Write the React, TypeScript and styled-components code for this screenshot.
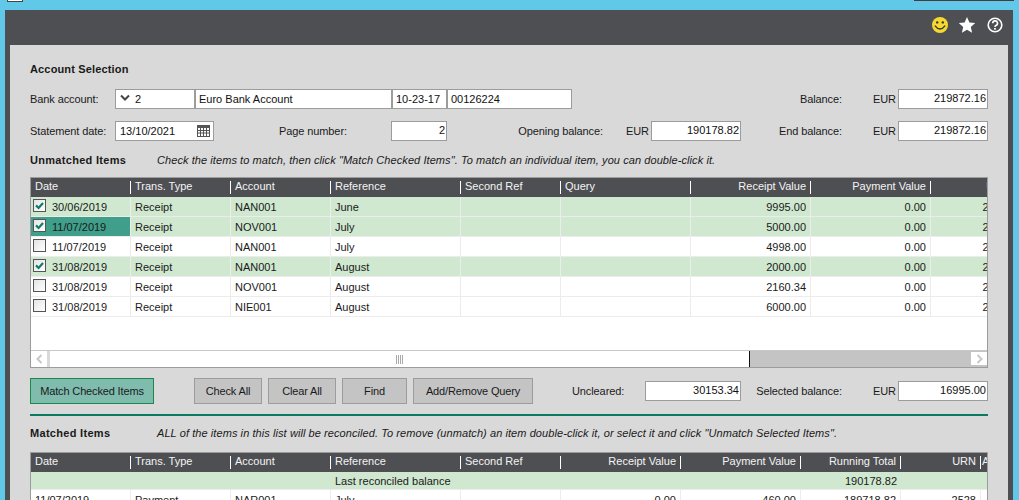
import React from "react";
import styled, { createGlobalStyle } from "styled-components";

const Global = createGlobalStyle`
  html, body { margin: 0; height: 500px; overflow: hidden; background: #62c8ea; }
  body { font-family: "Liberation Sans", Arial, sans-serif; font-size: 11px; color: #1a1a1a; }
  * { box-sizing: border-box; }
`;
const TopStrip = styled.div`height: 10px; display: flex; justify-content: space-between; align-items: flex-start; padding: 0 5px 0 7px;`;
const WindowBox = styled.div`width: 16px; height: 2px; background: #fff; border: 1px solid #444; border-top: 0;`;
const WindowEdge = styled.div`width: 100px; height: 1px; background: #4a3a3c;`;
const Frame = styled.div`width: 1008px; height: 490px; margin-left: 5px; padding: 0 5px; background: #4e4f53; overflow: hidden;`;
const Header = styled.div`height: 35px; display: flex; justify-content: flex-end; align-items: center; gap: 9px; padding: 0 4px 5px 0;`;
const Content = styled.div`height: 455px; background: #d9d9d9; padding: 18px 0 0 20px; width: 998px;`;
const SectionTitle = styled.div`font-weight: 700; height: 13px; line-height: 13px; letter-spacing: 0.15px;`;
const FormRow = styled.div<{ $top: number }>`display: flex; align-items: center; height: 20px; margin-top: ${p => p.$top}px;`;
const Label = styled.div<{ $w: number; $right?: boolean; $ml?: number }>`
  width: ${p => p.$w}px; flex: none; text-align: ${p => (p.$right ? "right" : "left")};
  margin-left: ${p => p.$ml ?? 0}px; white-space: nowrap; letter-spacing: -0.1px;
`;
const Field = styled.div<{ $w: number; $right?: boolean; $ml?: number; $pl?: number }>`
  width: ${p => p.$w}px; height: 20px; flex: none; margin-left: ${p => p.$ml ?? 0}px;
  border: 1px solid #9c9c9c; background: #fff; display: flex; align-items: center;
  justify-content: ${p => (p.$right ? "flex-end" : "flex-start")};
  padding: 0 1px ${p => (p.$right ? 3 : 0)}px ${p => p.$pl ?? 3}px; white-space: nowrap; color: #111;
`;
const Chevron = styled.svg`width: 10px; height: 8px; margin: 0 5px 2px 1px; flex: none;`;
const CalIcon = styled.svg`width: 13px; height: 12px; margin: 0 2px 1px auto; flex: none;`;
const HintRow = styled.div<{ $top: number }>`display: flex; height: 13px; line-height: 13px; margin-top: ${p => p.$top}px;`;
const BoldLabel = styled.div`font-weight: 700; width: 127px; flex: none; letter-spacing: 0.3px; white-space: nowrap;`;
const Hint = styled.div`font-style: italic; white-space: nowrap; letter-spacing: 0.075px;`;
const TableBox = styled.div<{ $top: number; $h: number }>`
  width: 958px; height: ${p => p.$h}px; margin-top: ${p => p.$top}px; border: 1px solid #9c9c9c;
  background: #fff; display: flex; flex-direction: column; overflow: hidden;
`;
const HeadRow = styled.div`height: 19px; flex: none; background: #4e4f53; display: flex; color: #f4f4f4;`;
const HeadCell = styled.div<{ $w: number; $right?: boolean; $pad?: number }>`
  width: ${p => p.$w}px; flex: none; height: 19px; line-height: 17px; padding: 0 5px 0 ${p => p.$pad ?? 4}px;
  text-align: ${p => (p.$right ? "right" : "left")}; overflow: hidden; white-space: nowrap; position: relative;
  &::after { content: ""; position: absolute; right: 0; top: 3px; height: 13px; width: 1px; background: #fff; }
`;
const Row = styled.div<{ $green?: boolean; $h?: number }>`
  height: ${p => p.$h ?? 20}px; flex: none; display: flex; background: ${p => (p.$green ? "#cfe8cf" : "#fff")};
  border-bottom: 1px solid #ececec; color: #1a1a1a;
`;
const Cell = styled.div<{ $w: number; $right?: boolean; $sel?: boolean; $plain?: boolean }>`
  width: ${p => p.$w}px; flex: none; display: flex; align-items: center; padding: 0 4px; overflow: hidden; white-space: nowrap;
  justify-content: ${p => (p.$right ? "flex-end" : "flex-start")};
  background: ${p => (p.$sel ? "#3f9f8a" : "transparent")};
  border-right: ${p => (p.$plain ? "0" : "1px solid #ececec")};
`;
const Check = styled.div`
  width: 13px; height: 13px; flex: none; margin: -2px 6px 0 -2px; border: 1px solid #555;
  background: linear-gradient(135deg, #e4e4e4, #fff); display: flex; align-items: center; justify-content: center;
`;
const Spacer = styled.div`flex: 1;`;
const Scrollbar = styled.div`height: 17px; flex: none; display: flex; align-items: stretch; border-top: 1px solid #c8c8c8; background: #fff;`;
const ScrollArrow = styled.div`width: 16px; flex: none; display: flex; align-items: center; justify-content: center; background: #fff;`;
const ScrollLeftGap = styled.div`width: 3px; background: #d9d9d9; flex: none;`;
const ScrollTrack = styled.div`width: 700px; flex: none; display: flex; align-items: center; justify-content: center; border-right: 1px solid #111;`;
const ScrollRest = styled.div`flex: 1; background: #c4c4c4; display: flex; justify-content: flex-end; padding: 1px 0 2px;`;
const ActionRow = styled.div`display: flex; align-items: center; height: 26px; margin-top: 10px;`;
const Btn = styled.div<{ $w: number; $ml: number; $primary?: boolean }>`
  width: ${p => p.$w}px; height: 26px; flex: none; margin-left: ${p => p.$ml}px; display: flex; align-items: center; justify-content: center;
  border: 1px solid ${p => (p.$primary ? "#1a8a4a" : "#9c9c9c")}; background: ${p => (p.$primary ? "#7fbcae" : "#c4c4c4")}; letter-spacing: -0.15px;
`;
const Rule = styled.div`width: 958px; height: 2px; background: #0a7a60; margin-top: 10px;`;
const Glyph = styled.svg<{ $ml?: number }>`flex: none; display: block; margin-left: ${p => p.$ml ?? 0}px;`;

const C = [100, 100, 100, 130, 100, 130, 120, 120, 84];
const rows = [
  [true, true, false, "30/06/2019", "NAN001", "June", "9995.00", "2522"],
  [true, true, true, "11/07/2019", "NOV001", "July", "5000.00", "2523"],
  [false, false, false, "11/07/2019", "NAN001", "July", "4998.00", "2524"],
  [true, true, false, "31/08/2019", "NAN001", "August", "2000.00", "2525"],
  [false, false, false, "31/08/2019", "NOV001", "August", "2160.34", "2526"],
  [false, false, false, "31/08/2019", "NIE001", "August", "6000.00", "2527"],
] as const;
const heads = ["Date", "Trans. Type", "Account", "Reference", "Second Ref", "Query"];
const C2 = [100, 100, 100, 130, 100, 120, 120, 100, 80, 10];

const CheckMark = () => (
  <svg width="9" height="8" viewBox="0 0 9 8"><path d="M1 3.4 L3.6 6 L8 1" fill="none" stroke="#0f7d6a" strokeWidth="2.2" /></svg>
);
const ChevL = () => <svg width="7" height="10" viewBox="0 0 7 10"><path d="M5.5 1 L1.5 5 L5.5 9" fill="none" stroke="#c8c8c8" strokeWidth="2" /></svg>;
const ChevR = () => <svg width="7" height="10" viewBox="0 0 7 10"><path d="M1.5 1 L5.5 5 L1.5 9" fill="none" stroke="#c8c8c8" strokeWidth="2" /></svg>;

export default function App() {
  return (
    <>
      <Global />
      <TopStrip><WindowBox /><WindowEdge /></TopStrip>
      <Frame>
        <Header>
          <Glyph width="18" height="18" viewBox="0 0 18 18">
            <circle cx="9" cy="9" r="8" fill="#f6d92f" />
            <circle cx="6.2" cy="6.4" r="1.2" fill="#333" /><circle cx="11.8" cy="6.4" r="1.2" fill="#333" />
            <path d="M3.8 9.6 Q9 16.4 14.2 9.6" fill="none" stroke="#333" strokeWidth="1.3" />
          </Glyph>
          <Glyph width="18" height="18" viewBox="0 0 18 18">
            <path d="M9 1 L11.4 6.5 L17.2 7 L12.8 10.9 L14.1 16.7 L9 13.7 L3.9 16.7 L5.2 10.9 L0.8 7 L6.6 6.5 Z" fill="#fff" />
          </Glyph>
          <Glyph $ml={1} width="18" height="18" viewBox="0 0 18 18">
            <circle cx="9" cy="9" r="6.8" fill="none" stroke="#fff" strokeWidth="1.6" />
            <path d="M6.7 7.3 A2.4 2.4 0 1 1 9.9 9.5 Q9 9.9 9 11" fill="none" stroke="#fff" strokeWidth="1.6" />
            <rect x="8.1" y="12" width="1.8" height="1.7" fill="#fff" />
          </Glyph>
        </Header>
        <Content>
          <SectionTitle>Account Selection</SectionTitle>
          <FormRow $top={13}>
            <Label $w={85}>Bank account:</Label>
            <Field $w={80}>
              <Chevron viewBox="0 0 10 8"><path d="M1 1.5 L5 5.5 L9 1.5" fill="none" stroke="#444" strokeWidth="2" /></Chevron>
              2
            </Field>
            <Field $w={197}>Euro Bank Account</Field>
            <Field $w={55}>10-23-17</Field>
            <Field $w={125}>00126224</Field>
            <Label $w={270} $right>Balance:</Label>
            <Label $w={25} $ml={31}>EUR</Label>
            <Field $w={90} $right>219872.16</Field>
          </FormRow>
          <FormRow $top={12}>
            <Label $w={85}>Statement date:</Label>
            <Field $w={99} $pl={4}>
              13/10/2021
              <CalIcon viewBox="0 0 13 12">
                <rect x="0.5" y="0.5" width="12" height="11" fill="#fff" stroke="#555" />
                <rect x="0.5" y="0.5" width="12" height="2.5" fill="#555" />
                <path d="M0.5 5.5 H12.5 M0.5 8 H12.5 M3.5 3 V11.5 M6.5 3 V11.5 M9.5 3 V11.5" stroke="#555" strokeWidth="1" fill="none" />
              </CalIcon>
            </Field>
            <Label $w={112} $ml={65}>Page number:</Label>
            <Field $w={56} $right>2</Field>
            <Label $w={156} $right>Opening balance:</Label>
            <Label $w={25} $ml={23}>EUR</Label>
            <Field $w={90} $right>190178.82</Field>
            <Label $w={101} $right>End balance:</Label>
            <Label $w={25} $ml={31}>EUR</Label>
            <Field $w={90} $right>219872.16</Field>
          </FormRow>
          <HintRow $top={13}>
            <BoldLabel>Unmatched Items</BoldLabel>
            <Hint>Check the items to match, then click "Match Checked Items". To match an individual item, you can double-click it.</Hint>
          </HintRow>
          <TableBox $top={10} $h={191}>
            <HeadRow>
              {heads.map((h, i) => <HeadCell key={h} $w={C[i]}>{h}</HeadCell>)}
              <HeadCell $w={C[6]} $right>Receipt Value</HeadCell>
              <HeadCell $w={C[7]} $right>Payment Value</HeadCell>
              <HeadCell $w={C[8]} $right>URN</HeadCell>
            </HeadRow>
            {rows.map((r, i) => (
              <Row key={i} $green={r[0]}>
                <Cell $w={C[0]} $sel={r[2]}>
                  <Check>{r[1] && <CheckMark />}</Check>{r[3]}
                </Cell>
                <Cell $w={C[1]}>Receipt</Cell>
                <Cell $w={C[2]}>{r[4]}</Cell>
                <Cell $w={C[3]}>{r[5]}</Cell>
                <Cell $w={C[4]} />
                <Cell $w={C[5]} />
                <Cell $w={C[6]} $right>{r[6]}</Cell>
                <Cell $w={C[7]} $right>0.00</Cell>
                <Cell $w={80} $right $plain>{r[7]}</Cell>
              </Row>
            ))}
            <Spacer />
            <Scrollbar>
              <ScrollArrow><ChevL /></ScrollArrow>
              <ScrollLeftGap />
              <ScrollTrack>
                <svg width="7" height="9" viewBox="0 0 7 9"><path d="M.5 0V9M2.5 0V9M4.5 0V9M6.5 0V9" stroke="#aaa" /></svg>
              </ScrollTrack>
              <ScrollRest><ScrollArrow><ChevR /></ScrollArrow></ScrollRest>
            </Scrollbar>
          </TableBox>
          <ActionRow>
            <Btn $w={124} $ml={0} $primary>Match Checked Items</Btn>
            <Btn $w={68} $ml={40}>Check All</Btn>
            <Btn $w={68} $ml={6}>Clear All</Btn>
            <Btn $w={65} $ml={6}>Find</Btn>
            <Btn $w={120} $ml={6}>Add/Remove Query</Btn>
            <Label $w={72} $ml={39}>Uncleared:</Label>
            <Field $w={96} $right $ml={1}>30153.34</Field>
            <Label $w={101} $right>Selected balance:</Label>
            <Label $w={25} $ml={31}>EUR</Label>
            <Field $w={90} $right>16995.00</Field>
          </ActionRow>
          <Rule />
          <HintRow $top={11}>
            <BoldLabel>Matched Items</BoldLabel>
            <Hint>ALL of the items in this list will be reconciled. To remove (unmatch) an item double-click it, or select it and click "Unmatch Selected Items".</Hint>
          </HintRow>
          <TableBox $top={12} $h={60}>
            <HeadRow>
              {["Date", "Trans. Type", "Account", "Reference", "Second Ref"].map((h, i) => <HeadCell key={h} $w={C2[i]}>{h}</HeadCell>)}
              <HeadCell $w={C2[5]} $right>Receipt Value</HeadCell>
              <HeadCell $w={C2[6]} $right>Payment Value</HeadCell>
              <HeadCell $w={C2[7]} $right>Running Total</HeadCell>
              <HeadCell $w={C2[8]} $right>URN</HeadCell>
              <HeadCell $w={C2[9]} $pad={1}>A</HeadCell>
            </HeadRow>
            <Row $green $h={18}>
              <Cell $w={C2[0]} $plain /><Cell $w={C2[1]} $plain /><Cell $w={C2[2]} $plain />
              <Cell $w={C2[3] + C2[4]} $plain>Last reconciled balance</Cell>
              <Cell $w={C2[5]} $plain /><Cell $w={C2[6]} $plain />
              <Cell $w={C2[7]} $right $plain>190178.82</Cell>
            </Row>
            <Row>
              <Cell $w={C2[0]}>11/07/2019</Cell>
              <Cell $w={C2[1]}>Payment</Cell>
              <Cell $w={C2[2]}>NAR001</Cell>
              <Cell $w={C2[3]}>July</Cell>
              <Cell $w={C2[4]} />
              <Cell $w={C2[5]} $right>0.00</Cell>
              <Cell $w={C2[6]} $right>460.00</Cell>
              <Cell $w={C2[7]} $right>189718.82</Cell>
              <Cell $w={C2[8]} $right>2528</Cell>
            </Row>
          </TableBox>
        </Content>
      </Frame>
    </>
  );
}
